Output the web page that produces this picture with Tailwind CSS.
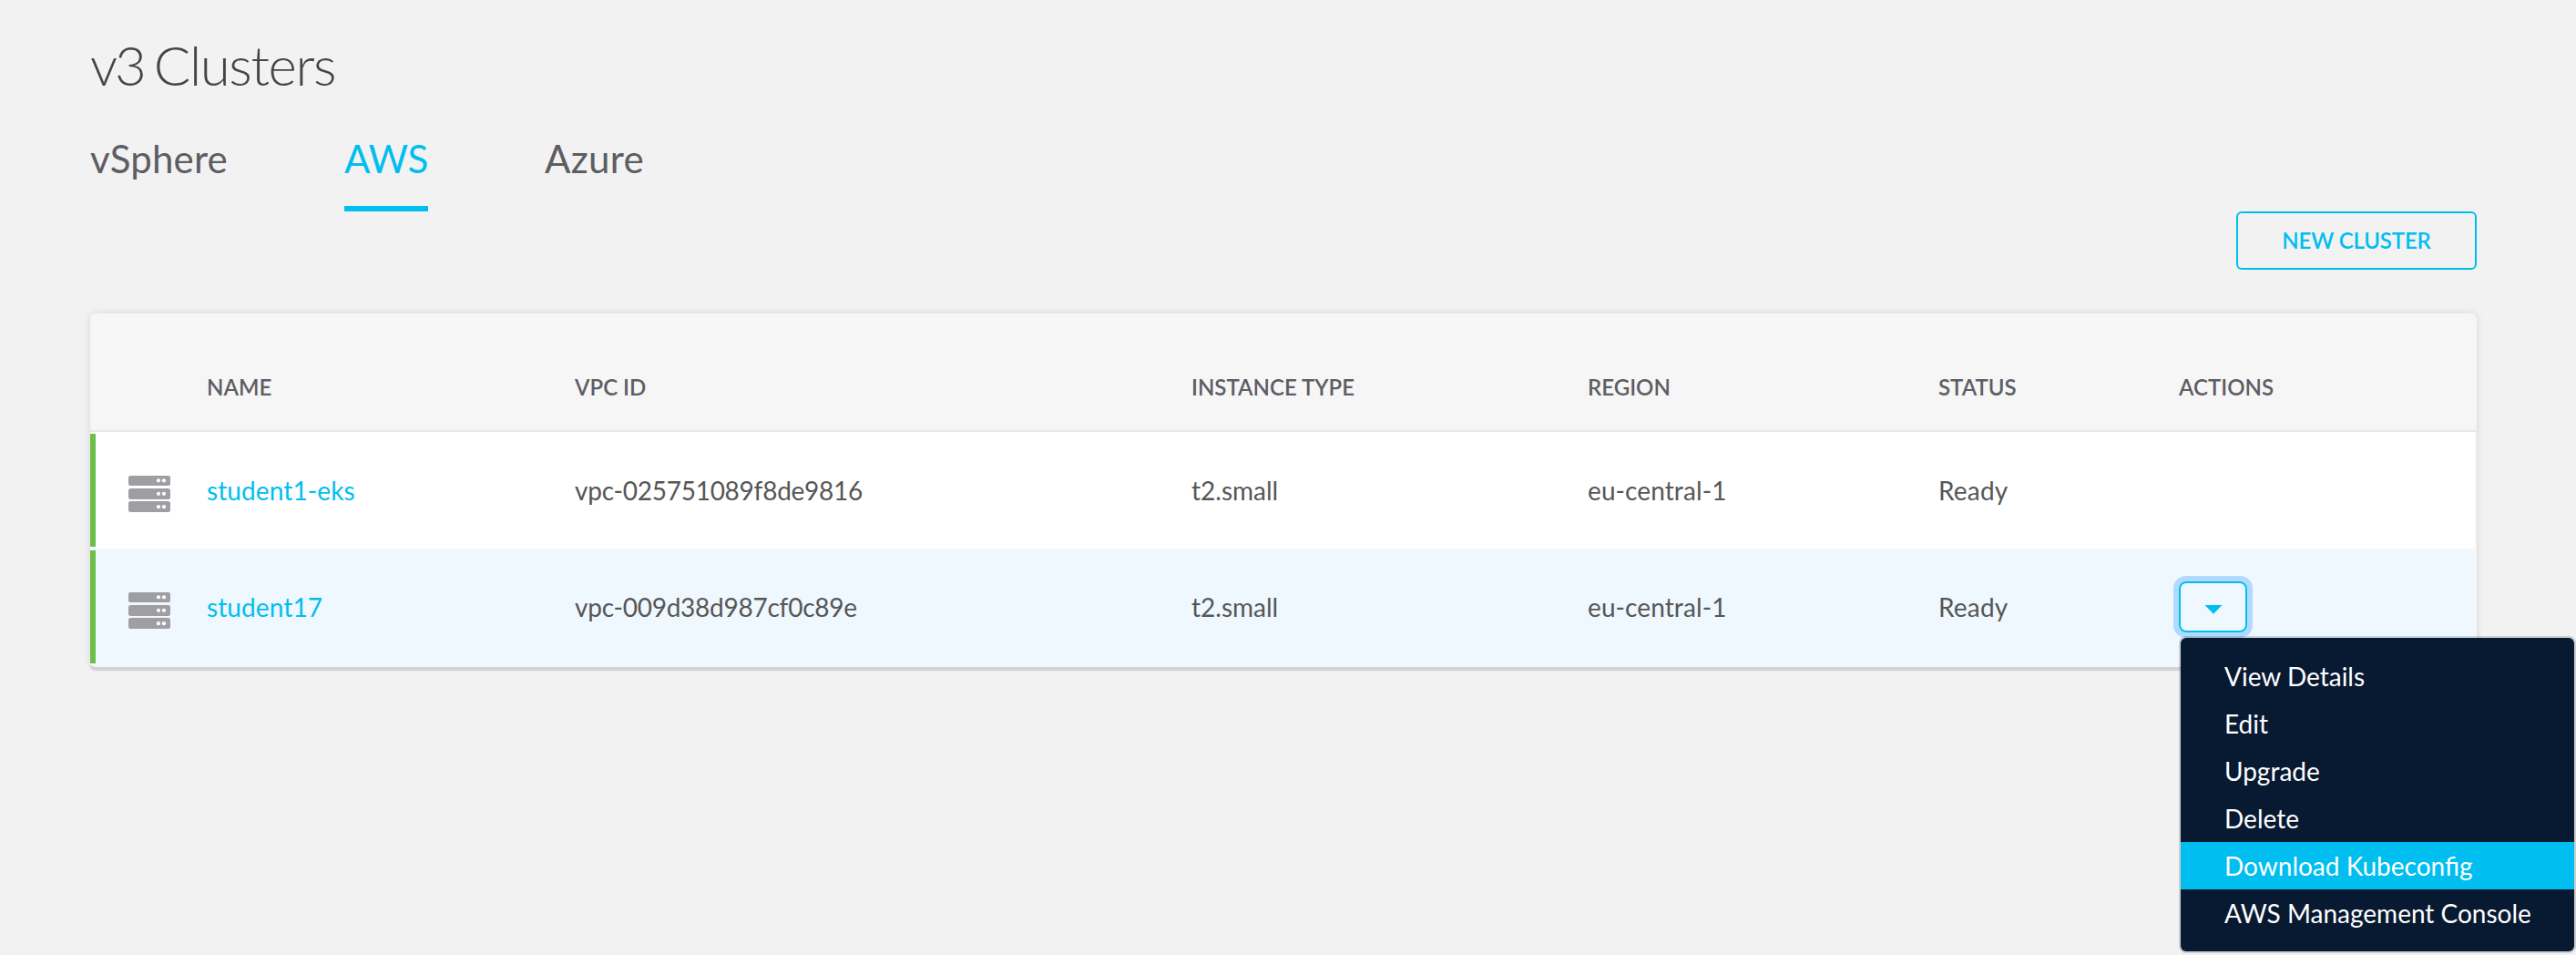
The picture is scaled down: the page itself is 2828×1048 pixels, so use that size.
<!DOCTYPE html>
<html lang="en">
<head>
<meta charset="utf-8">
<title>v3 Clusters</title>
<script src="https://cdn.jsdelivr.net/npm/@tailwindcss/browser@4"></script>
</head>
<body class="h-[1048px] overflow-hidden bg-[#f2f2f2] font-['Lato',sans-serif] text-[28px] text-[#565656]">
<svg class="hidden">
  <symbol id="servers" viewBox="0 0 46 40">
    <rect x="0" y="0" width="46" height="11" rx="2" fill="#9f9ea3"/>
    <rect x="0" y="14" width="46" height="12" rx="2.5" fill="#9f9ea3"/>
    <rect x="0" y="28" width="46" height="12" rx="2.5" fill="#9f9ea3"/>
    <g fill="#fff">
      <circle cx="33" cy="5.3" r="2.1"/><circle cx="39" cy="5.3" r="2.1"/>
      <circle cx="33" cy="19.8" r="2.1"/><circle cx="39" cy="19.8" r="2.1"/>
      <circle cx="33" cy="34.2" r="2.1"/><circle cx="39" cy="34.2" r="2.1"/>
    </g>
  </symbol>
</svg>
<main class="pt-[35px] pr-[109px] pl-[99px]">
  <h1 class="text-[60px] leading-[72px] font-light tracking-[-1.4px] text-[#454545] [word-spacing:-4px]"><span class="tracking-[-3px]">v3</span> Clusters</h1>
  <nav class="mt-[37px] flex gap-32 text-[42px] leading-[60px] text-[#5d5d64]">
    <a class="border-b-6 border-transparent pb-[22px] tracking-[0.2px]">vSphere</a>
    <a class="border-b-6 border-[#00beef] pb-[22px] tracking-[-0.2px] text-[#00beef]">AWS</a>
    <a class="border-b-6 border-transparent pb-[22px] tracking-[0.3px]">Azure</a>
  </nav>
  <div class="flex justify-end">
    <button class="flex h-16 w-[264px] items-center justify-center rounded-md border-2 border-[#00beef] text-[24px] font-semibold tracking-[-0.15px] text-[#00beef]">NEW CLUSTER</button>
  </div>

  <section class="mt-12 rounded-md border-b-2 border-[#f6f6f6] bg-[#f6f6f6] shadow-[0_4px_0_#d3d3d3,0_0_8px_rgba(0,0,0,0.12)]">
    <div class="grid h-[130px] grid-cols-[128px_404px_677px_435px_385px_264px_1fr] border-b-2 border-[#e8e8e8] pt-[57px] text-[24px] leading-[48px] font-semibold text-[#5d5d64]">
      <span></span><span>NAME</span><span>VPC ID</span><span>INSTANCE TYPE</span><span>REGION</span><span>STATUS</span><span>ACTIONS</span>
    </div>
    <div class="mr-0.5 grid h-32 grid-cols-[128px_404px_677px_435px_385px_264px_1fr] items-center bg-white">
      <div class="flex h-[124px] items-center border-l-6 border-[#6cc04a] pt-2 pl-9"><svg class="h-10 w-[46px]"><use href="#servers"/></svg></div>
      <a class="tracking-[0.1px] text-[#00beef]">student1-eks</a><span class="tracking-[-0.25px]">vpc-025751089f8de9816</span><span>t2.small</span><span class="tracking-[0.1px]">eu-central-1</span><span class="tracking-[0.2px]">Ready</span><span></span>
    </div>
    <div class="mr-0.5 grid h-32 grid-cols-[128px_404px_677px_435px_385px_264px_1fr] items-center bg-[#eff8fe]">
      <div class="flex h-[124px] items-center border-l-6 border-[#6cc04a] pt-2 pl-9"><svg class="h-10 w-[46px]"><use href="#servers"/></svg></div>
      <a class="tracking-[0.1px] text-[#00beef]">student17</a><span class="tracking-[-0.25px]">vpc-009d38d987cf0c89e</span><span>t2.small</span><span class="tracking-[0.1px]">eu-central-1</span><span class="tracking-[0.2px]">Ready</span>
      <div class="relative">
        <button class="flex h-14 w-[75px] items-center justify-center rounded-lg border-2 border-[#00beef] pt-[5px] shadow-[0_0_0_6px_#b2daff]">
          <svg class="h-[10px] w-5" viewBox="0 0 20 10"><path d="M0.5 0h19L10 9.8z" fill="#00beef"/></svg>
        </button>
        <ul class="absolute top-[60px] left-0 w-[436px] rounded-lg border-2 border-black/15 bg-[#081a32] bg-clip-padding py-4 leading-[52px] whitespace-nowrap text-white">
          <li class="px-12">View Details</li>
          <li class="px-12">Edit</li>
          <li class="px-12">Upgrade</li>
          <li class="px-12">Delete</li>
          <li class="bg-[#00beef] px-12">Download Kubeconfig</li>
          <li class="px-12">AWS Management Console</li>
        </ul>
      </div>
    </div>
  </section>
</main>
</body>
</html>
